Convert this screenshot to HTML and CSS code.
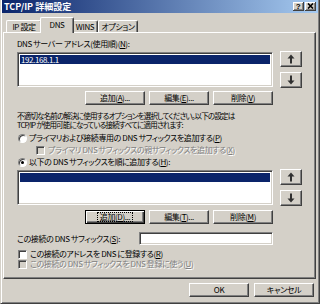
FILE: index.html
```html
<!DOCTYPE html>
<html lang="ja">

<head>
    <meta charset="UTF-8">
    <meta name="viewport" content="width=device-width, initial-scale=1.0">
    <title>TCP/IP 詳細設定</title>
    <link rel="stylesheet" href="styles.css">
</head>

<body>
    <div class="window">
        <div class="titlebar">
            <span class="title">TCP/IP 詳細設定</span>
            <div class="caption-buttons">
                <span class="cap-btn">?</span>
                <span class="cap-btn">
                    <svg width="7" height="6" viewBox="0 0 7 6"><path d="M1 0.5 L6 5.5 M6 0.5 L1 5.5" stroke="#000" stroke-width="1.6"/></svg>
                </span>
            </div>
        </div>

        <div class="tabs">
            <span class="tab tab-ip">IP 設定</span>
            <span class="tab active">DNS</span>
            <span class="tab tab-wins">WINS</span>
            <span class="tab tab-opt">オプション</span>
        </div>

        <div class="panel">
            <div class="label first">DNS サーバー アドレス(使用順)(<u>N</u>):</div>
            <div class="list-row">
                <div class="listbox">
                    <div class="item selected">192.168.1.1</div>
                </div>
                <div class="arrows">
                    <button class="arrow"><svg width="8" height="10" viewBox="0 0 8 10"><path d="M4 0.5 L7.5 4.5 H5 V9.5 H3 V4.5 H0.5 Z" fill="#303030"/></svg></button>
                    <button class="arrow"><svg width="8" height="10" viewBox="0 0 8 10"><path d="M4 9.5 L7.5 5.5 H5 V0.5 H3 V5.5 H0.5 Z" fill="#303030"/></svg></button>
                </div>
            </div>
            <div class="btn-row">
                <button class="btn">追加(<u>A</u>)...</button>
                <button class="btn">編集(<u>E</u>)...</button>
                <button class="btn">削除(<u>V</u>)</button>
            </div>

            <p class="note">不適切な名前の解決に使用するオプションを選択してください。以下の設定は<br>TCP/IP が使用可能になっている接続すべてに適用されます:</p>

            <div class="option first-option"><span class="radio"></span>プライマリおよび接続専用の DNS サフィックスを追加する(<u>P</u>)</div>
            <div class="option sub disabled"><span class="check"></span>プライマリ DNS サフィックスの親サフィックスを追加する(<u>X</u>)</div>
            <div class="option"><span class="radio checked"></span>以下の DNS サフィックスを順に追加する(<u>H</u>):</div>

            <div class="list-row">
                <div class="listbox">
                    <div class="item selected"></div>
                </div>
                <div class="arrows">
                    <button class="arrow"><svg width="8" height="10" viewBox="0 0 8 10"><path d="M4 0.5 L7.5 4.5 H5 V9.5 H3 V4.5 H0.5 Z" fill="#303030"/></svg></button>
                    <button class="arrow"><svg width="8" height="10" viewBox="0 0 8 10"><path d="M4 9.5 L7.5 5.5 H5 V0.5 H3 V5.5 H0.5 Z" fill="#303030"/></svg></button>
                </div>
            </div>
            <div class="btn-row second">
                <button class="btn default"><span class="focus">追加(<u>D</u>)...</span></button>
                <button class="btn">編集(<u>T</u>)...</button>
                <button class="btn">削除(<u>M</u>)</button>
            </div>

            <div class="field-row">
                <span class="field-label">この接続の DNS サフィックス(<u>S</u>):</span>
                <span class="textbox"></span>
            </div>

            <div class="option check-line first-check"><span class="check enabled"></span>この接続のアドレスを DNS に登録する(<u>R</u>)</div>
            <div class="option check-line disabled"><span class="check"></span>この接続の DNS サフィックスを DNS 登録に使う(<u>U</u>)</div>
        </div>

        <div class="dialog-buttons">
            <button class="btn">OK</button>
            <button class="btn">キャンセル</button>
        </div>
    </div>
</body>

</html>
```

FILE: styles.css
```css
* {
    box-sizing: border-box;
}

body {
    margin: 0;
    background-color: #d4d0c8;
    font-family: "Noto Sans CJK JP", "Liberation Sans", sans-serif;
    font-size: 8px;
    letter-spacing: -0.4px;
    font-feature-settings: "palt";
    color: #000;
}

u {
    text-decoration-thickness: 1px;
    text-underline-offset: 1px;
}

.window {
    width: 320px;
    height: 304px;
    padding: 0 1px 1px 1px;
    background-color: #d4d0c8;
    border-left: 1px solid #d4d0c8;
    border-right: 1px solid #404040;
    border-bottom: 1px solid #404040;
    box-shadow: inset 1px 0 #fff, inset -1px -1px #808080;
}

/* title bar */
.titlebar {
    height: 13px;
    display: flex;
    align-items: center;
    justify-content: space-between;
    padding: 0 2px 0 2px;
    background: linear-gradient(to right, #0a246a, #a6caf0);
}

.title {
    color: #fff;
    font-weight: bold;
    font-size: 9px;
    letter-spacing: 0;
    line-height: 13px;
}

.caption-buttons {
    display: flex;
    gap: 1px;
}

.cap-btn {
    width: 11px;
    height: 9px;
    display: flex;
    align-items: center;
    justify-content: center;
    font-family: "Liberation Sans", sans-serif;
    font-size: 8px;
    font-weight: bold;
    line-height: 9px;
    background-color: #d4d0c8;
    border-right: 1px solid #404040;
    border-bottom: 1px solid #404040;
    box-shadow: inset 1px 1px #fff, inset -1px -1px #808080;
}

/* tabs */
.tabs {
    position: relative;
    z-index: 1;
    display: flex;
    align-items: flex-end;
    height: 19px;
    margin: 0 1px;
    padding-left: 3px;
}

.tab {
    height: 12px;
    text-align: center;
    line-height: 11px;
    border-top: 1px solid #fff;
    border-left: 1px solid #fff;
    border-right: 1px solid #404040;
    box-shadow: inset -1px 0 #808080;
    border-radius: 2px 2px 0 0;
}

.tab-ip {
    width: 36px;
}

.tab-wins {
    width: 26px;
}

.tab-opt {
    width: 40px;
}

.tab.active {
    position: relative;
    width: 34px;
    height: 16px;
    margin: 0 -2px -1px;
    line-height: 13px;
    background-color: #d4d0c8;
}

/* tab page */
.panel {
    height: 247px;
    margin: 0 2px 0 1px;
    padding-left: 13px;
    border: 1px solid;
    border-color: #fff #404040 #404040 #fff;
    box-shadow: inset -1px -1px #808080;
}

.label {
    line-height: 12px;
}

.label.first {
    margin-top: 5px;
}

.list-row {
    display: flex;
    align-items: flex-start;
    height: 35px;
    margin-top: 2px;
}

.listbox {
    width: 256px;
    height: 35px;
    padding: 2px;
    background-color: #fff;
    border: 1px solid;
    border-color: #808080 #fff #fff #808080;
    box-shadow: inset 1px 1px #404040, inset -1px -1px #d4d0c8;
}

.item {
    height: 9px;
    padding-left: 1px;
    line-height: 9px;
}

.item.selected {
    background-color: #0a246a;
    color: #fff;
}

.arrows {
    display: flex;
    flex-direction: column;
    gap: 5px;
    margin: -1px 0 0 7px;
}

.arrow,
.btn {
    padding: 0;
    font: inherit;
    letter-spacing: inherit;
    color: #000;
    background-color: #d4d0c8;
    border: 1px solid;
    border-color: #fff #404040 #404040 #fff;
    box-shadow: inset -1px -1px #808080;
    display: flex;
    align-items: center;
    justify-content: center;
}

.arrow {
    width: 22px;
    height: 16px;
}

.btn {
    width: 60px;
    height: 14px;
    line-height: 12px;
}

.btn.default {
    border-color: #000;
    box-shadow: inset 1px 1px #fff, inset -1px -1px #404040, inset -2px -2px #808080;
}

.focus {
    padding: 0 2px;
    line-height: 8px;
    outline: 1px dotted #000;
}

.btn-row {
    display: flex;
    justify-content: flex-end;
    gap: 4px;
    width: 256px;
    margin-top: 4px;
}

.btn-row.second {
    margin-top: 5px;
}

.note {
    margin: 6px 0 0;
    font-size: 7.5px;
    letter-spacing: -0.8px;
    line-height: 9px;
    white-space: nowrap;
}

.option {
    display: flex;
    align-items: center;
    height: 12px;
    line-height: 12px;
    white-space: nowrap;
}

.first-option {
    margin-top: 3px;
}

.option.sub {
    padding-left: 18px;
}

.disabled {
    color: #808080;
    text-shadow: 1px 1px #fff;
}

.radio {
    position: relative;
    width: 9px;
    height: 9px;
    margin: 0 2px 0 1px;
    border-radius: 50%;
    background-color: #fff;
    border: 1px solid;
    border-color: #808080 #fff #fff #808080;
    box-shadow: inset 1px 1px #404040;
}

.radio.checked::after {
    content: "";
    position: absolute;
    left: 2px;
    top: 2px;
    width: 3px;
    height: 3px;
    border-radius: 50%;
    background-color: #000;
}

.check {
    width: 9px;
    height: 9px;
    margin: 0 3px 0 1px;
    background-color: #d4d0c8;
    border: 1px solid;
    border-color: #808080 #fff #fff #808080;
    box-shadow: inset 1px 1px #404040;
}

.check.enabled {
    background-color: #fff;
}

.field-row {
    display: flex;
    align-items: center;
    justify-content: space-between;
    width: 256px;
    height: 13px;
    margin-top: 8px;
}

.field-label {
    white-space: nowrap;
}

.textbox {
    width: 134px;
    height: 13px;
    background-color: #fff;
    border: 1px solid;
    border-color: #808080 #fff #fff #808080;
    box-shadow: inset 1px 1px #404040, inset -1px -1px #d4d0c8;
}

.check-line {
    height: 10px;
    line-height: 10px;
}

.first-check {
    margin-top: 4px;
}

.check-line .check {
    margin-right: 3px;
}

/* OK / cancel */
.dialog-buttons {
    display: flex;
    justify-content: flex-end;
    gap: 5px;
    margin-top: 4px;
    padding-right: 4px;
}
```
